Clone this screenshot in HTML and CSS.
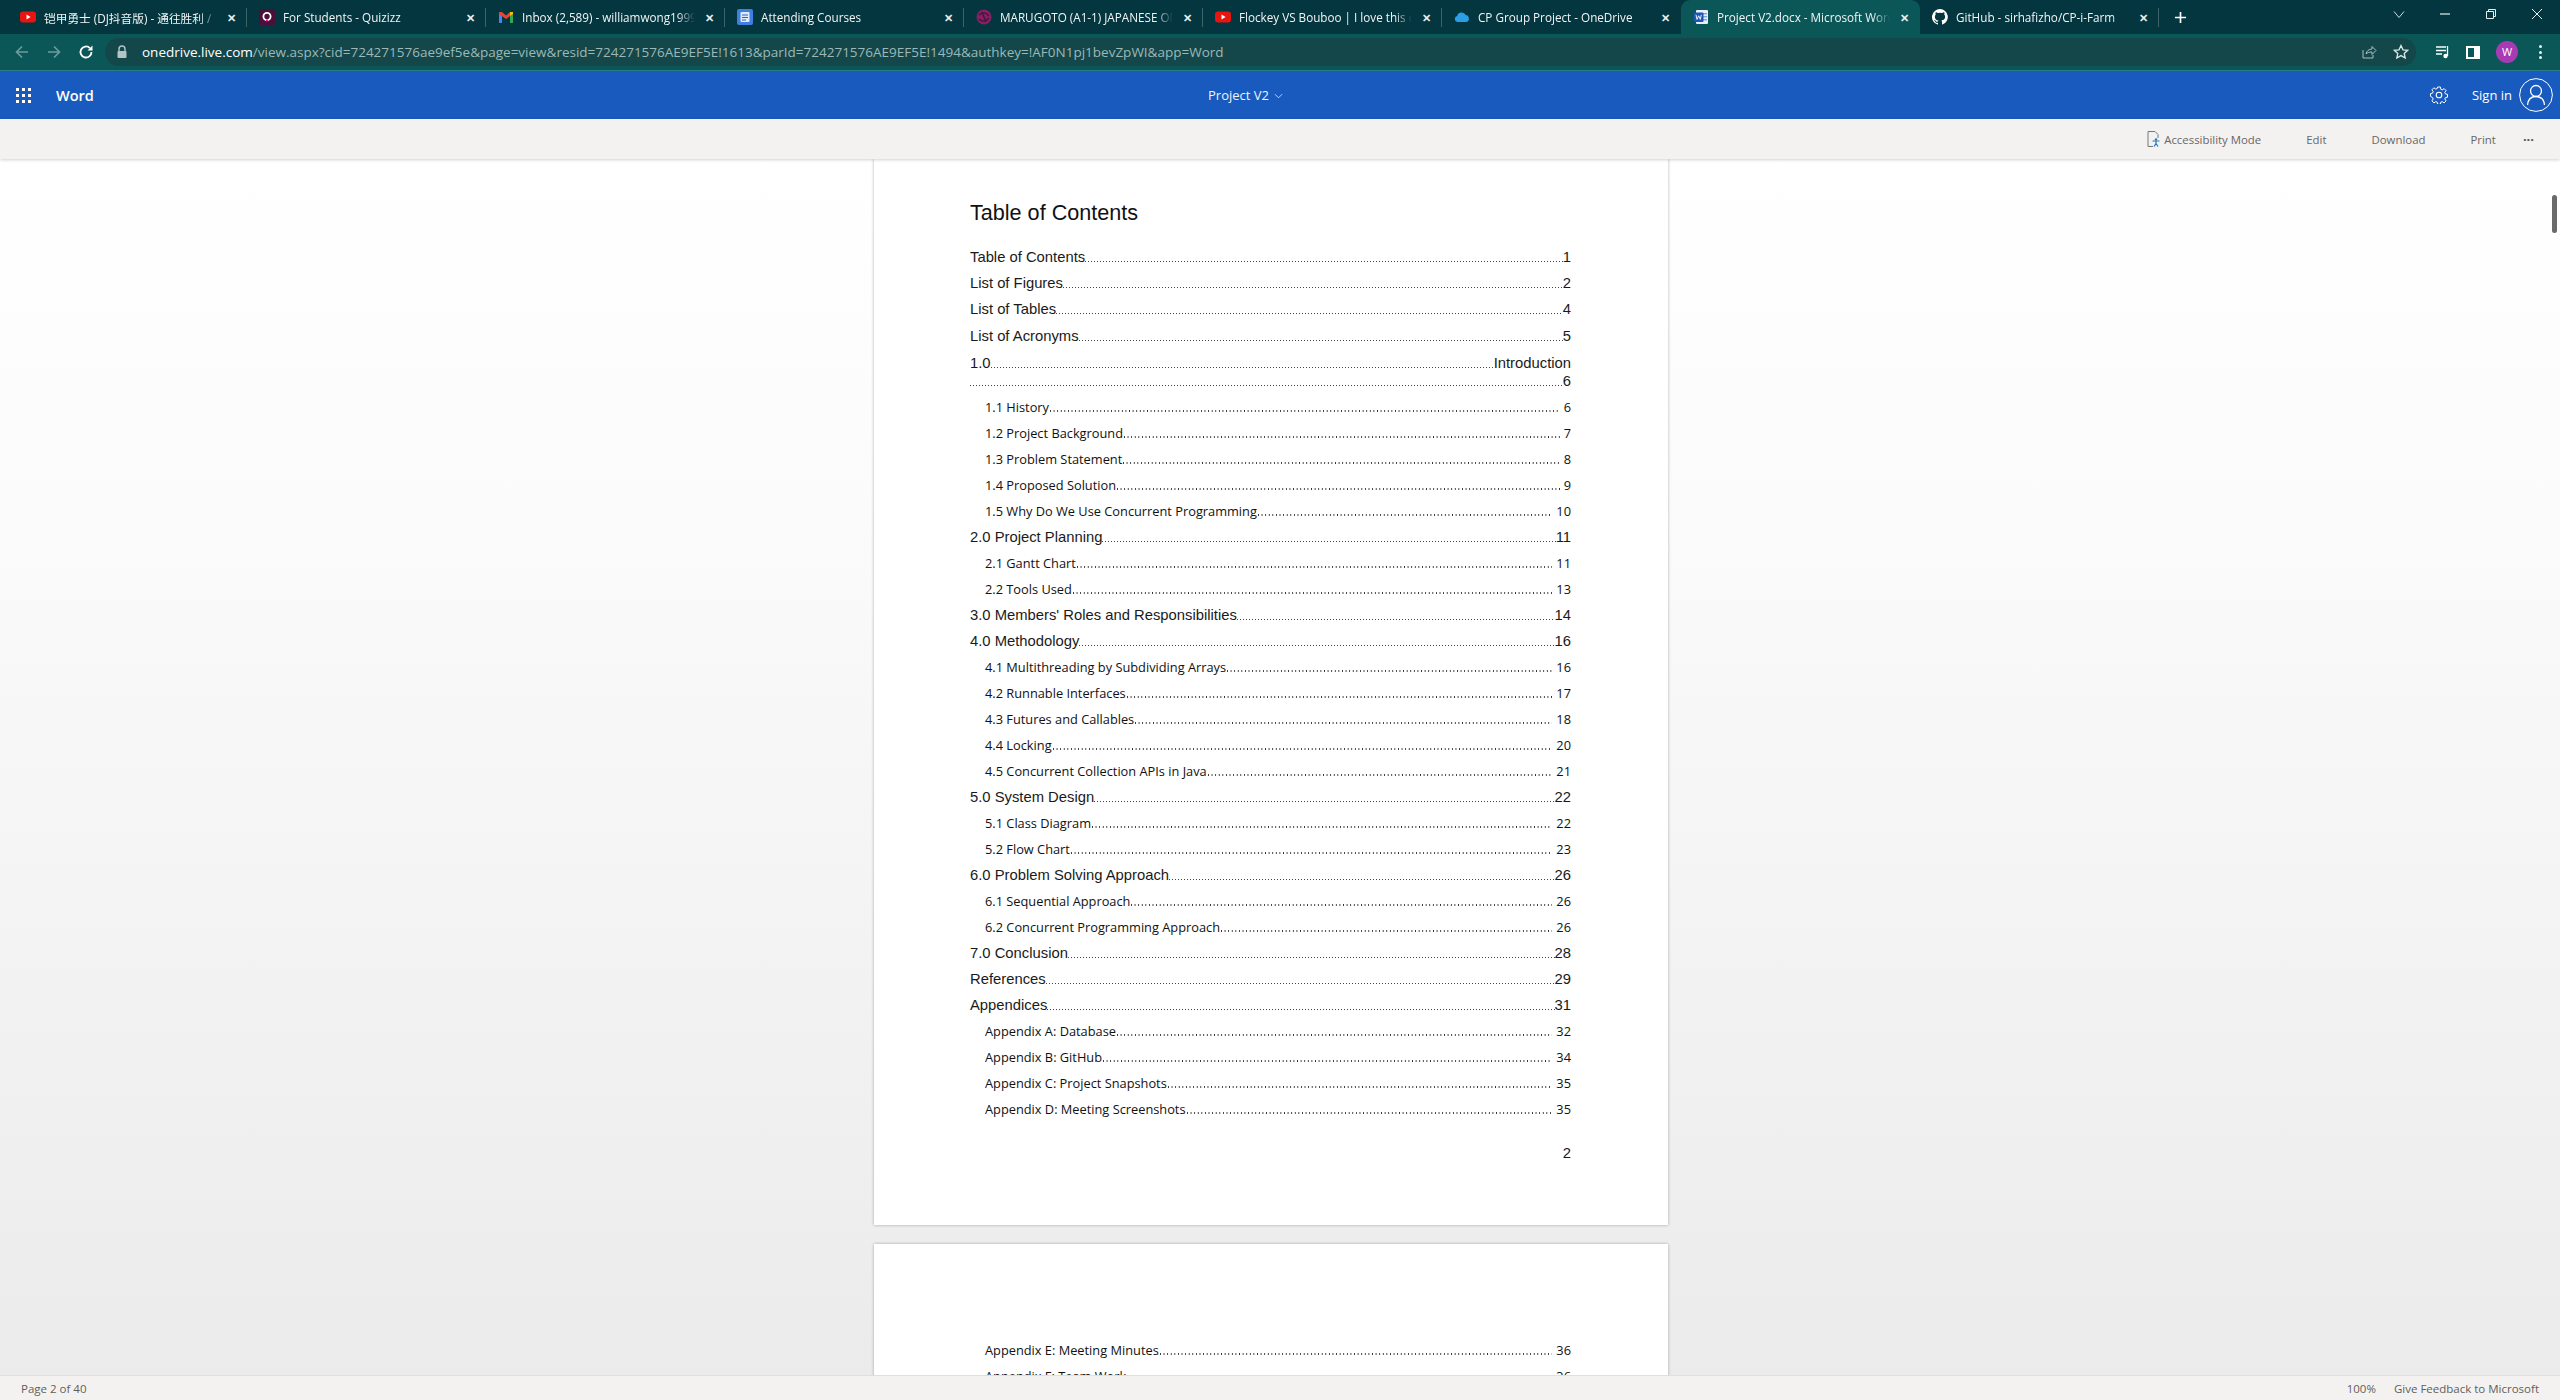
FILE: index.html
```html
<!DOCTYPE html>
<html>
	<head>
		<meta charset="utf-8">
		<title>Project V2.docx - Microsoft Word</title>
		<link rel="stylesheet" href="styles.css">
	</head>
	<body>
		<!-- browser tabs -->
		<div class="tabstrip">
			<div class="tab">
				<svg class="fav" viewBox="0 0 16 16"><rect y="2.5" width="16" height="11" rx="3" fill="#e8140f"/><path d="M6.5 5.6v4.8L10.6 8z" fill="#fff"/></svg>
				<span class="tab-title">铠甲勇士 (DJ抖音版) - 通往胜利 /</span>
				<span class="tab-close">✕</span>
			</div>
			<div class="tab">
				<svg class="fav" viewBox="0 0 16 16"><rect width="16" height="16" rx="2" fill="#4a1038"/><circle cx="8" cy="7.5" r="3.6" fill="none" stroke="#fff" stroke-width="1.8"/><rect x="7" y="10.5" width="2" height="2" fill="#f0c"/></svg>
				<span class="tab-title">For Students - Quizizz</span>
				<span class="tab-close">✕</span>
			</div>
			<div class="tab">
				<svg class="fav" viewBox="0 0 16 16"><path d="M1 3v11h3V7z" fill="#4285f4"/><path d="M15 3v11h-3V7z" fill="#34a853"/><path d="M1 3l3 0 4 3.5L12 3l3 0v2L8 10 1 5z" fill="#ea4335"/><path d="M12 3h3v2l-3 2z" fill="#fbbc04"/></svg>
				<span class="tab-title">Inbox (2,589) - williamwong1999</span>
				<span class="tab-close">✕</span>
			</div>
			<div class="tab">
				<svg class="fav" viewBox="0 0 16 16"><rect width="16" height="16" rx="2" fill="#3f7fe0"/><rect x="3.5" y="3" width="9" height="10" rx="1" fill="#dfeafc"/><path d="M5 6h6M5 8.5h6M5 11h4" stroke="#2d63c0" stroke-width="1"/></svg>
				<span class="tab-title">Attending Courses</span>
				<span class="tab-close">✕</span>
			</div>
			<div class="tab">
				<svg class="fav" viewBox="0 0 16 16"><circle cx="8" cy="8" r="7.5" fill="#8a1f63"/><path d="M3 6c3-3 7-3 10 1M3 10c3 3 7 3 10-1M6 3l4 10" fill="none" stroke="#3c1a3a" stroke-width="1.4"/></svg>
				<span class="tab-title">MARUGOTO (A1-1) JAPANESE ON</span>
				<span class="tab-close">✕</span>
			</div>
			<div class="tab">
				<svg class="fav" viewBox="0 0 16 16"><rect y="2.5" width="16" height="11" rx="3" fill="#e8140f"/><path d="M6.5 5.6v4.8L10.6 8z" fill="#fff"/></svg>
				<span class="tab-title">Flockey VS Bouboo | I love this da</span>
				<span class="tab-close">✕</span>
			</div>
			<div class="tab">
				<svg class="fav" viewBox="0 0 16 16"><path d="M3.6 13a3 3 0 0 1-.5-5.9A4.6 4.6 0 0 1 11.7 6 3.6 3.6 0 0 1 12.4 13z" fill="#2b9fe6"/></svg>
				<span class="tab-title">CP Group Project - OneDrive</span>
				<span class="tab-close">✕</span>
			</div>
			<div class="tab tab-active">
				<svg class="fav" viewBox="0 0 16 16"><rect x="3" y="1" width="12" height="14" rx="1" fill="#e8eefb"/><rect x="9" y="4" width="5" height="1.4" fill="#7fa3e0"/><rect x="9" y="7" width="5" height="1.4" fill="#7fa3e0"/><rect x="9" y="10" width="5" height="1.4" fill="#7fa3e0"/><rect x="1" y="3.5" width="9.5" height="9.5" rx="1" fill="#1d56b4"/><path d="M3 5.8l1 4.6 1.7-3.6 1.6 3.6 1-4.6" fill="none" stroke="#fff" stroke-width=".9"/></svg>
				<span class="tab-title">Project V2.docx - Microsoft Word</span>
				<span class="tab-close">✕</span>
			</div>
			<div class="tab">
				<svg class="fav" viewBox="0 0 16 16"><path fill="#fff" d="M8 0a8 8 0 0 0-2.5 15.6c.4.1.5-.2.5-.4v-1.4c-2.2.5-2.7-1-2.7-1-.4-.9-.9-1.200-.9-1.200-.7-.5.1-.5.1-.5.8.1 1.200.8 1.200.8.7 1.200 1.900.9 2.300.7.1-.5.3-.9.5-1.100-1.800-.2-3.600-.9-3.600-4 0-.9.3-1.600.8-2.100-.1-.2-.4-1 .1-2.100 0 0 .7-.2 2.200.8a7.600 7.600 0 0 1 4 0c1.500-1 2.200-.8 2.200-.8.4 1.100.2 1.900.1 2.100.5.6.8 1.300.8 2.100 0 3.100-1.900 3.700-3.700 3.900.3.300.6.800.6 1.500v2.200c0 .2.100.5.600.4A8 8 0 0 0 8 0z"/></svg>
				<span class="tab-title">GitHub - sirhafizho/CP-i-Farm</span>
				<span class="tab-close">✕</span>
			</div>
			<svg class="newtab" viewBox="0 0 14 14"><path d="M7 1v12M1 7h12" stroke="#fff" stroke-width="1.800"/></svg>
			<div class="winctl">
				<svg viewBox="0 0 12 12"><path d="M1 3.500l5 6 5-6" fill="none" stroke="#cfdcdc" stroke-width="1"/></svg>
				<svg viewBox="0 0 12 12"><path d="M1 6h10" stroke="#e6eeee" stroke-width="1.200"/></svg>
				<svg viewBox="0 0 12 12"><path d="M1.500 3.500h7v7h-7zM3.500 3.500v-2h7v7h-2" fill="none" stroke="#e6eeee" stroke-width="1"/></svg>
				<svg viewBox="0 0 12 12"><path d="M1 1l10 10M11 1L1 11" stroke="#e6eeee" stroke-width="1"/></svg>
			</div>
		</div>

		<!-- address bar -->
		<div class="toolbar">
			<svg class="nav-btn" viewBox="0 0 16 16"><path d="M14 8H2.500M8 2.500L2.500 8 8 13.500" fill="none" stroke="#6f9c9d" stroke-width="1.600"/></svg>
			<svg class="nav-btn" viewBox="0 0 16 16"><path d="M2 8h11.500M8 2.500L13.500 8 8 13.500" fill="none" stroke="#6f9c9d" stroke-width="1.600"/></svg>
			<svg class="nav-btn" viewBox="0 0 16 16"><path d="M13.500 8a5.500 5.500 0 1 1-1.600-3.900" fill="none" stroke="#fff" stroke-width="1.800"/><path d="M14.500 1.500v5h-5z" fill="#fff"/></svg>
			<div class="omnibox">
				<svg class="lock" viewBox="0 0 12 14"><path d="M3 6V4a3 3 0 0 1 6 0v2" fill="none" stroke="#b4c4c6" stroke-width="1.400"/><rect x="1.500" y="6" width="9" height="7" rx="1" fill="#b4c4c6"/></svg>
				<span class="url"><b>onedrive.live.com</b>/view.aspx?cid=724271576ae9ef5e&amp;page=view&amp;resid=724271576AE9EF5E!1613&amp;parId=724271576AE9EF5E!1494&amp;authkey=!AF0N1pj1bevZpWI&amp;app=Word</span>
				<svg class="omni-icon" viewBox="0 0 16 16"><path d="M2 6v8h10v-3M5 10c.5-3 3-5 6-5V2.500L15 6.500l-4 4V8c-2.500 0-4.500.5-6 2z" fill="none" stroke="#a9c0c1" stroke-width="1"/></svg>
				<svg class="omni-icon" viewBox="0 0 16 16"><path d="M8 1.500l2 4.300 4.600.5-3.400 3.100 1 4.600L8 11.600 3.800 14l1-4.600L1.400 6.300 6 5.800z" fill="none" stroke="#dce8e8" stroke-width="1.300"/></svg>
			</div>
			<svg class="bar-icon" viewBox="0 0 16 16"><path d="M1 3h10M1 6.500h10M1 10h6" stroke="#fff" stroke-width="1.300"/><path d="M12.500 2v10" stroke="#fff" stroke-width="1.300"/><circle cx="10.500" cy="12" r="2.200" fill="#fff"/></svg>
			<span class="sidepanel"></span>
			<span class="avatar">W</span>
			<span class="kebab"><i></i><i></i><i></i></span>
		</div>

		<!-- word online header -->
		<div class="appbar">
			<div class="app-left">
				<span class="waffle"><i></i><i></i><i></i><i></i><i></i><i></i><i></i><i></i><i></i></span>
				<span class="app-name">Word</span>
			</div>
			<div class="doc-name">Project V2 <svg viewBox="0 0 10 6"><path d="M1 1l4 4 4-4" fill="none" stroke="#cfe0f8" stroke-width="1"/></svg></div>
			<div class="app-right">
				<svg class="gear" viewBox="0 0 18 18"><circle cx="9" cy="9" r="2.800" fill="none" stroke="#fff" stroke-width="1.100"/><path d="M7.600 1h2.800l.4 2.300 1.400.6 1.900-1.300 2 2-1.300 1.900.6 1.400 2.100.5v2.800l-2.100.4-.6 1.400 1.300 1.900-2 2-1.900-1.300-1.400.6-.4 2.100H7.600l-.4-2.100-1.400-.6-1.900 1.300-2-2 1.300-1.900-.6-1.400L.5 10.400V7.600l2.100-.5.6-1.400-1.300-1.900 2-2 1.900 1.300 1.400-.6z" fill="none" stroke="#fff" stroke-width="1"/></svg>
				<span class="signin">Sign in</span>
				<svg class="user" viewBox="0 0 34 34"><circle cx="17" cy="17" r="16.400" fill="none" stroke="#fff" stroke-width="1"/><circle cx="17" cy="13" r="5.500" fill="none" stroke="#fff" stroke-width="1.300"/><path d="M8.500 27c.5-5.500 4-8.500 8.500-8.500s8 3 8.500 8.500" fill="none" stroke="#fff" stroke-width="1.300"/></svg>
			</div>
		</div>

		<div class="cmdbar">
			<span class="cmd cmd-a11y">
				<svg viewBox="0 0 13 16"><path d="M1 .5h7l3 3V7M1 .5v15h5" fill="none" stroke="#77787a" stroke-width="1"/><circle cx="9" cy="8.500" r="1.200" fill="#1f78c8"/><path d="M5.500 10h7M9 10v2.500l-2 3M9 12.500l2 3" fill="none" stroke="#1f78c8" stroke-width="1.200"/></svg>
				Accessibility Mode
			</span>
			<span class="cmd">Edit</span>
			<span class="cmd">Download</span>
			<span class="cmd">Print</span>
			<span class="cmd cmd-more">···</span>
		</div>

		<!-- document -->
		<div class="viewer">
			<div class="page">
				<h1 class="toc-title">Table of Contents</h1>
				<div class="row"><span>Table of Contents</span><i class="dots"></i><span>1</span></div>
				<div class="row"><span>List of Figures</span><i class="dots"></i><span>2</span></div>
				<div class="row"><span>List of Tables</span><i class="dots"></i><span>4</span></div>
				<div class="row row-gap"><span>List of Acronyms</span><i class="dots"></i><span>5</span></div>
				<div class="row row-gap"><span>1.0</span><i class="dots"></i><span>Introduction</span></div>
				<div class="row row-wrap"><i class="dots"></i><span>6</span></div>
				<div class="row sub"><span>1.1 History</span><i class="dots"></i><span>6</span></div>
				<div class="row sub"><span>1.2 Project Background</span><i class="dots"></i><span>7</span></div>
				<div class="row sub"><span>1.3 Problem Statement</span><i class="dots"></i><span>8</span></div>
				<div class="row sub"><span>1.4 Proposed Solution</span><i class="dots"></i><span>9</span></div>
				<div class="row sub"><span>1.5 Why Do We Use Concurrent Programming</span><i class="dots"></i><span>10</span></div>
				<div class="row"><span>2.0 Project Planning</span><i class="dots"></i><span>11</span></div>
				<div class="row sub"><span>2.1 Gantt Chart</span><i class="dots"></i><span>11</span></div>
				<div class="row sub"><span>2.2 Tools Used</span><i class="dots"></i><span>13</span></div>
				<div class="row"><span>3.0 Members' Roles and Responsibilities</span><i class="dots"></i><span>14</span></div>
				<div class="row"><span>4.0 Methodology</span><i class="dots"></i><span>16</span></div>
				<div class="row sub"><span>4.1 Multithreading by Subdividing Arrays</span><i class="dots"></i><span>16</span></div>
				<div class="row sub"><span>4.2 Runnable Interfaces</span><i class="dots"></i><span>17</span></div>
				<div class="row sub"><span>4.3 Futures and Callables</span><i class="dots"></i><span>18</span></div>
				<div class="row sub"><span>4.4 Locking</span><i class="dots"></i><span>20</span></div>
				<div class="row sub"><span>4.5 Concurrent Collection APIs in Java</span><i class="dots"></i><span>21</span></div>
				<div class="row"><span>5.0 System Design</span><i class="dots"></i><span>22</span></div>
				<div class="row sub"><span>5.1 Class Diagram</span><i class="dots"></i><span>22</span></div>
				<div class="row sub"><span>5.2 Flow Chart</span><i class="dots"></i><span>23</span></div>
				<div class="row"><span>6.0 Problem Solving Approach</span><i class="dots"></i><span>26</span></div>
				<div class="row sub"><span>6.1 Sequential Approach</span><i class="dots"></i><span>26</span></div>
				<div class="row sub"><span>6.2 Concurrent Programming Approach</span><i class="dots"></i><span>26</span></div>
				<div class="row"><span>7.0 Conclusion</span><i class="dots"></i><span>28</span></div>
				<div class="row"><span>References</span><i class="dots"></i><span>29</span></div>
				<div class="row"><span>Appendices</span><i class="dots"></i><span>31</span></div>
				<div class="row sub"><span>Appendix A: Database</span><i class="dots"></i><span>32</span></div>
				<div class="row sub"><span>Appendix B: GitHub</span><i class="dots"></i><span>34</span></div>
				<div class="row sub"><span>Appendix C: Project Snapshots</span><i class="dots"></i><span>35</span></div>
				<div class="row sub"><span>Appendix D: Meeting Screenshots</span><i class="dots"></i><span>35</span></div>
				<div class="page-num">2</div>
			</div>
			<div class="page page-next">
				<div class="row sub"><span>Appendix E: Meeting Minutes</span><i class="dots"></i><span>36</span></div>
				<div class="row sub"><span>Appendix F: Team Work</span><i class="dots"></i><span>36</span></div>
			</div>
			<span class="thumb"></span>
		</div>

		<div class="statusbar">
			<span class="page-count">Page 2 of 40</span>
			<span class="zoom-level">100%</span>
			<span>Give Feedback to Microsoft</span>
		</div>
	</body>
</html>
```

FILE: styles.css
```css
*{margin: 0;padding: 0;box-sizing: border-box;}
html,body{height: 100%;}
body{
	display: flex;
	flex-direction: column;
	overflow: hidden;
	font-family: "Open Sans","Noto Sans CJK SC",sans-serif;
	background: #fff;
}

/* tabs */
.tabstrip{
	height: 34px;
	padding-left: 8px;
	display: flex;
	align-items: center;
	background: #04363f;
	flex: none;
}
.tab{
	width: 239px;
	height: 34px;
	padding: 0 10px 0 12px;
	display: flex;
	align-items: center;
	gap: 8px;
	position: relative;
	color: #f1f5f5;
	font-size: 11.700px;
	flex: none;
}
.tab::after{
	content: "";
	position: absolute;
	right: 0;
	top: 8px;
	height: 19px;
	border-right: 1px solid #3c6469;
}
.tab-active{
	background: #0b5758;
	border-radius: 9px 9px 0 0;
}
.tab-active::after{display: none;}
.tab:nth-child(7)::after{display: none;}
.fav{width: 16px;height: 16px;flex: none;}
.tab-title{
	flex: 1;
	min-width: 0;
	overflow: hidden;
	white-space: nowrap;
	-webkit-mask-image: linear-gradient(90deg,#000 90%,transparent 100%);
}
.tab-close{
	width: 12px;
	font-size: 11px;
	font-weight: 700;
	text-align: center;
	color: #e8eeee;
	flex: none;
}
.newtab{width: 13px;height: 13px;margin-left: 15px;flex: none;}
.winctl{margin-left: auto;display: flex;height: 100%;align-items: center;margin-top: -6px;}
.winctl svg{width: 46px;height: 12px;}

/* address bar */
.toolbar{
	height: 37px;
	padding-left: 14px;
	display: flex;
	align-items: center;
	background: #0b5758;
	border-bottom: 1px solid #2a7c86;
	flex: none;
}
.nav-btn{width: 16px;height: 16px;margin-right: 16px;flex: none;}
.omnibox{
	width: 2311px;
	height: 28px;
	margin-left: -5px;
	padding: 0 7px 0 10px;
	display: flex;
	align-items: center;
	background: #134749;
	border-radius: 14px;
	flex: none;
}
.lock{width: 12px;height: 14px;margin-left: 1px;flex: none;}
.url{
	margin-left: 14px;
	flex: 1;
	font-size: 13.500px;
	color: #9db8b9;
	white-space: nowrap;
}
.url b{font-weight: 400;color: #fff;}
.omni-icon{width: 16px;height: 16px;margin-left: 16px;flex: none;}
.bar-icon{width: 16px;height: 16px;margin-left: 19px;flex: none;}
.sidepanel{
	width: 14px;
	height: 13px;
	margin-left: 15px;
	border: 2px solid #fff;
	border-right-width: 6px;
	flex: none;
}
.avatar{
	width: 22px;
	height: 22px;
	margin-left: 16px;
	border-radius: 50%;
	background: #a83bb4;
	color: #fff;
	font-size: 11px;
	line-height: 22px;
	text-align: center;
	flex: none;
}
.kebab{
	margin-left: 21px;
	display: flex;
	flex-direction: column;
	gap: 2.500px;
	flex: none;
}
.kebab i{width: 3px;height: 3px;border-radius: 50%;background: #e6f0f0;}

/* word header */
.appbar{
	height: 48px;
	display: grid;
	grid-template-columns: 1208px auto 1fr;
	align-items: center;
	background: #185abd;
	color: #fff;
	flex: none;
}
.app-left{display: flex;align-items: center;padding-left: 16px;}
.waffle{
	width: 16px;
	display: grid;
	grid-template-columns: repeat(3,3px);
	gap: 3px;
}
.waffle i{width: 3px;height: 3px;background: #fff;}
.app-name{margin-left: 24px;font-size: 14.500px;font-weight: 600;}
.doc-name{font-size: 13px;color: #eef4fd;display: flex;align-items: center;gap: 5px;}
.doc-name svg{width: 9px;height: 6px;margin-top: 2px;}
.app-right{display: flex;align-items: center;justify-content: flex-end;padding-right: 7px;}
.gear{width: 18px;height: 18px;}
.signin{margin-left: 24px;font-size: 13px;}
.user{width: 34px;height: 34px;margin-left: 7px;}

.cmdbar{
	height: 40px;
	padding-right: 26px;
	display: flex;
	align-items: center;
	justify-content: flex-end;
	gap: 45px;
	background: #f3f2f1;
	box-shadow: 0 1px 3px rgba(0,0,0,.18);
	font-size: 11.400px;
	color: #686765;
	position: relative;
	z-index: 2;
	flex: none;
}
.cmd-a11y{display: flex;align-items: center;gap: 4px;}
.cmd-a11y svg{width: 13px;height: 16px;}
.cmd-more{margin-left: -18px;font-size: 13px;font-weight: 700;color: #555;}

/* document */
.viewer{
	flex: 1;
	min-height: 0;
	padding-left: 874px;
	overflow: hidden;
	position: relative;
	background: linear-gradient(#fff,#fbfbfb 30%,#ebebeb);
}
.page{
	width: 794px;
	height: 1066px;
	padding: 39px 97px 0 96px;
	background: #fff;
	box-shadow: 0 0 3px rgba(0,0,0,.3);
}
.page-next{height: 400px;margin-top: 19px;padding-top: 93px;}
.toc-title{
	height: 46px;
	font: 400 21.600px/30px "Liberation Sans",Arial,sans-serif;
	color: #111;
}
.row{
	height: 26px;
	display: flex;
	align-items: baseline;
	font: 14.800px/26px "Liberation Sans",Arial,sans-serif;
	color: #1a1a1a;
	white-space: nowrap;
}
.row-gap{margin-top: 1px;}
.row-wrap{margin-top: -8px;}
.dots{
	flex: 1;
	height: 1px;
	background: linear-gradient(90deg,#444 1px,transparent 1px) 0 0/3px 1px repeat-x;
}
.sub{
	padding-left: 15px;
	font: 12.800px/26px "Open Sans",sans-serif;
	color: #111;
}
.sub .dots{
	height: 2px;
	margin: 0 4px 0 1px;
	background: linear-gradient(90deg,#333 1.300px,transparent 1.300px) 0 0/3.600px 2px repeat-x;
}
.page-num{
	margin-top: 18px;
	text-align: right;
	font: 14.800px/26px "Liberation Sans",Arial,sans-serif;
	color: #1a1a1a;
}
.thumb{
	position: absolute;
	right: 3px;
	top: 36px;
	width: 5px;
	height: 38px;
	border-radius: 3px;
	background: #6a6a6a;
}

.statusbar{
	height: 25px;
	padding: 0 21px;
	display: flex;
	align-items: center;
	gap: 18px;
	background: #f3f2f1;
	border-top: 1px solid #e1dfdd;
	font-size: 11.500px;
	color: #605e5c;
	position: relative;
	flex: none;
}
.page-count{margin-right: auto;}
```
